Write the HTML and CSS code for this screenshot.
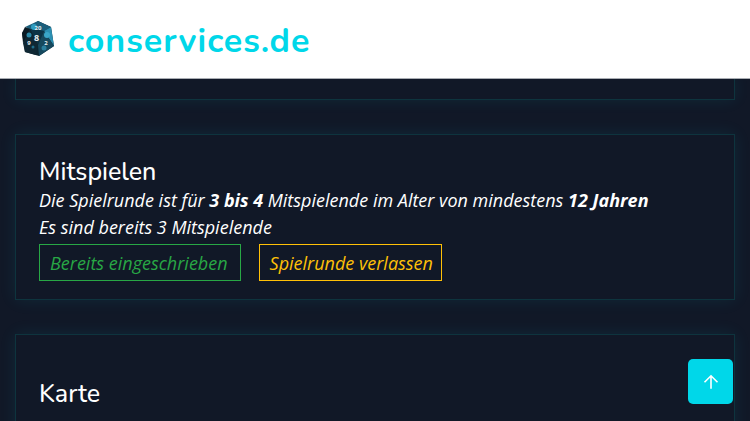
FILE: index.html
```html
<!DOCTYPE html>
<html lang="de">
<head>
<meta charset="utf-8">
<title>conservices.de</title>
<link rel="stylesheet" href="styles.css">
</head>
<body>
<header class="site-header">
  <svg class="logo" viewBox="0 0 32 35" width="32" height="35" aria-hidden="true">
    <polygon points="16,0 29,6 32,25 17,35 3,31 0,12" fill="#0c2530"/>
    <polygon points="16,0 29,6 22,10 8,8 3,6" fill="#1b5f7c"/>
    <polygon points="8,8 22,10 16,24" fill="#0d3346"/>
    <polygon points="3,6 8,8 1,22 0,12" fill="#0a1a24"/>
    <polygon points="29,6 32,25 22,10" fill="#2b8fb2"/>
    <polygon points="1,22 8,8 16,24 14,34 3,31" fill="#0f2733"/>
    <polygon points="32,25 22,10 16,24 17,35" fill="#16495e"/>
    <circle cx="12" cy="6" r="3" fill="#2f9cc0"/>
    <circle cx="25" cy="14" r="3" fill="#3aa6c8"/>
    <circle cx="7" cy="14" r="2.5" fill="#2b88a8"/>
    <circle cx="22" cy="27" r="2.5" fill="#2b7f9e"/>
    <circle cx="11" cy="26" r="1.5" fill="#1e6c8a"/>
    <text class="die-num" x="16" y="9" text-anchor="middle">20</text>
    <text class="die-num die-big" x="14.5" y="20" text-anchor="middle">8</text>
    <text class="die-num" x="7" y="24" text-anchor="middle">9</text>
    <text class="die-num" x="24" y="24" text-anchor="middle">2</text>
  </svg>
  <span class="brand">conservices.de</span>
</header>
<main class="content">
  <section class="card card-stub"></section>
  <section class="card card-play">
    <h2 class="card-title">Mitspielen</h2>
    <p class="line">Die Spielrunde ist für <strong>3 bis 4</strong> Mitspielende im Alter von mindestens <strong>12 Jahren</strong></p>
    <p class="line">Es sind bereits 3 Mitspielende</p>
    <div class="actions">
      <a class="btn btn-green">Bereits eingeschrieben</a>
      <a class="btn btn-yellow">Spielrunde verlassen</a>
    </div>
  </section>
  <section class="card card-map">
    <h2 class="card-title">Karte</h2>
  </section>
</main>
<a class="to-top" aria-label="Nach oben">
  <svg viewBox="0 0 16 16" width="16" height="16" aria-hidden="true">
    <path d="M8 14.8V1.8M1.5 8.3L8 1.8l6.5 6.5" fill="none" stroke="#fff" stroke-width="1.6"/>
  </svg>
</a>
</body>
</html>
```
FILE: styles.css
```css
* { box-sizing: border-box; }
html, body { margin: 0; height: 421px; overflow: hidden; }
body { background: #111827; color: #fff; font-family: "Open Sans", sans-serif; position: relative; }
.site-header {
  position: relative;
  z-index: 1;
  height: 79px;
  background: #fff;
  border-bottom: 1px solid #a9adb3;
  display: flex;
  align-items: center;
  gap: 14px;
  padding: 0 22px;
}
.logo { flex: none; margin-top: -1px; }
.die-num { font: 700 6px "Open Sans", sans-serif; fill: #e8eef0; }
.die-big { font-size: 9px; }
.brand {
  font-family: "Nunito", "Lato", sans-serif;
  font-weight: 700;
  font-size: 34px;
  letter-spacing: 1px;
  margin-top: 4px;
  color: #00d7e9;
}
.content { display: flex; flex-direction: column; gap: 34px; padding: 0 15px; }
.card {
  background: #111827;
  border: 1px solid #0e343e;
  box-shadow: 0 0 16px rgba(0, 215, 233, 0.09);
}
.card-stub { height: 21px; border-top: 0; }
.card-play { height: 166px; padding: 22px 23px 0; }
.card-map { height: 200px; padding: 44px 23px 0; }
.card-title {
  margin: 0;
  font-family: "Nunito", "Lato", sans-serif;
  font-weight: 500;
  font-size: 25px;
  line-height: 30px;
}
.line { margin: 0; font-size: 18px; line-height: 27px; font-style: italic; }
.line strong { font-weight: 700; }
.actions { display: flex; gap: 18px; margin-top: 3px; }
.btn {
  display: block;
  height: 37px;
  border: 1px solid;
  font-size: 18px;
  line-height: 36px;
  font-style: italic;
}
.btn-green { padding: 0 12px 0 10px; color: #28a745; border-color: #28a745; }
.btn-yellow { padding: 0 8px 0 10px; color: #ffc107; border-color: #ffc107; }
.to-top {
  position: absolute;
  left: 688px;
  top: 359px;
  width: 45px;
  height: 45px;
  background: #00d7e9;
  border-radius: 5px;
  display: flex;
  align-items: center;
  justify-content: center;
}
```
